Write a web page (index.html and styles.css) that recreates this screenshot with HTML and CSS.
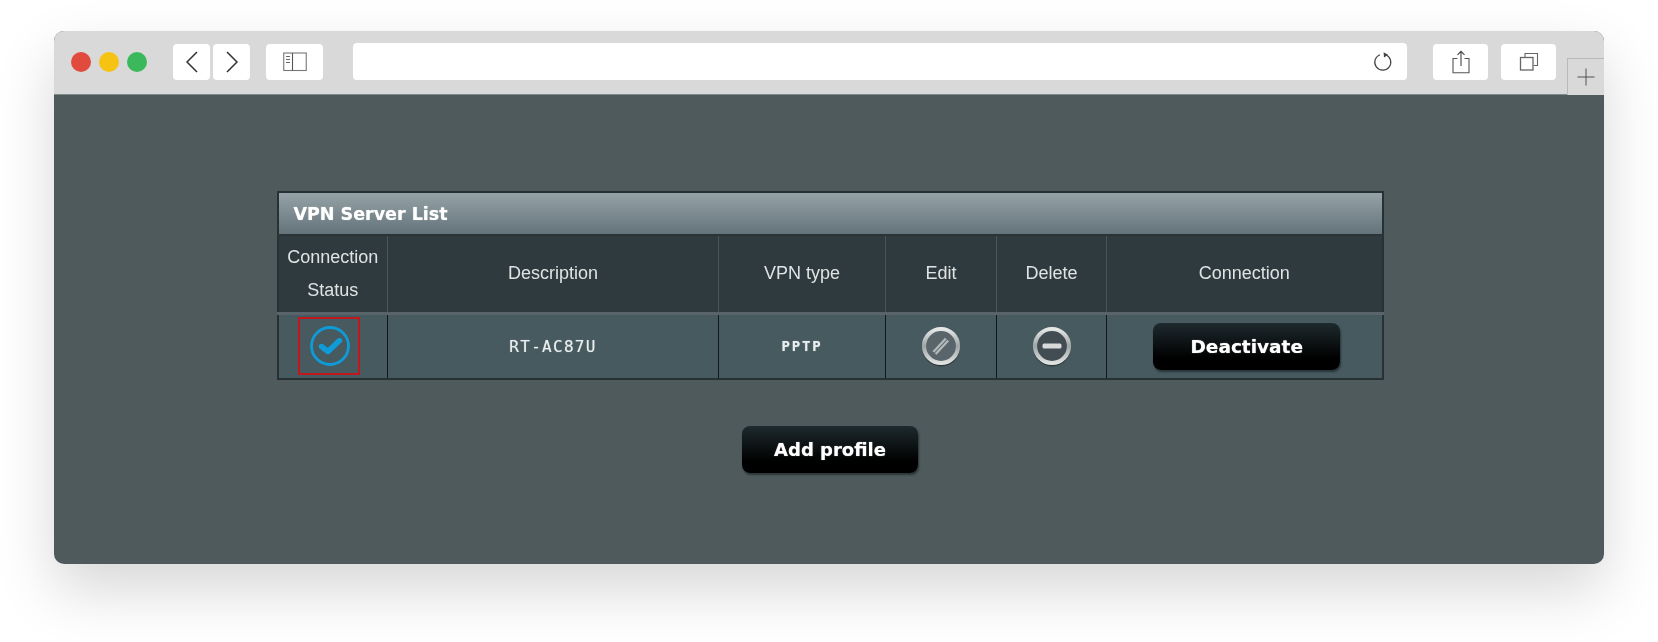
FILE: index.html
```html
<!DOCTYPE html>
<html lang="en">
<head>
<meta charset="utf-8">
<title>VPN Server List</title>
<link rel="stylesheet" href="styles.css">
</head>
<body>
<div class="window">
  <header class="toolbar">
    <div class="lights">
      <span class="light red"></span>
      <span class="light yellow"></span>
      <span class="light green"></span>
    </div>
    <div class="nav-group">
      <button class="tool nav-btn" aria-label="Back">
        <svg width="14" height="22" viewBox="0 0 14 22"><path d="M12 1 2 11l10 10" fill="none" stroke="#333" stroke-width="1.500"/></svg>
      </button>
      <button class="tool nav-btn" aria-label="Forward">
        <svg width="14" height="22" viewBox="0 0 14 22"><path d="M2 1 12 11 2 21" fill="none" stroke="#333" stroke-width="1.500"/></svg>
      </button>
    </div>
    <button class="tool sidebar-btn" aria-label="Sidebar">
      <svg width="24" height="20" viewBox="0 0 24 20"><rect x=".75" y="1" width="22.500" height="17.500" fill="none" stroke="#777" stroke-width="1.100"/><path d="M9.500 1v17.500" stroke="#555" stroke-width="1.100"/><path d="M3 4.500h4M3 7.500h4M3 10.500h4" stroke="#666" stroke-width="1"/></svg>
    </button>
    <div class="address">
      <svg width="20" height="20" viewBox="0 0 20 20"><path d="M12.800 2.800A8 8 0 1 1 7 2.700" fill="none" stroke="#444" stroke-width="1.200"/><path d="M10.600 .2 15 2.800l-4 2.800z" fill="#444"/></svg>
    </div>
    <button class="tool action-btn share-btn" aria-label="Share">
      <svg width="18" height="24" viewBox="0 0 18 24"><path d="M5.500 8.500H1v14.300h16V8.500h-4.500" fill="none" stroke="#555" stroke-width="1.100"/><path d="M9 16V1.500M5.500 4.800 9 1.300l3.500 3.500" fill="none" stroke="#444" stroke-width="1.100"/></svg>
    </button>
    <button class="tool action-btn tabs-btn" aria-label="Tabs">
      <svg width="20" height="20" viewBox="0 0 20 20"><rect x="1.500" y="5.500" width="12.500" height="12.500" fill="none" stroke="#666" stroke-width="1.300"/><path d="M6 5V1.500H18.500V13.500H14.500" fill="none" stroke="#666" stroke-width="1.100"/></svg>
    </button>
    <button class="new-tab" aria-label="New tab">
      <svg width="18" height="18" viewBox="0 0 18 18"><path d="M9 .5v17M.5 9h17" stroke="#444" stroke-width=".9"/></svg>
    </button>
  </header>
  <main class="content">
    <table class="vpn-table">
      <colgroup>
        <col class="c-status"><col class="c-desc"><col class="c-type"><col class="c-edit"><col class="c-del"><col>
      </colgroup>
      <thead>
        <tr><th colspan="6" class="title">VPN Server List</th></tr>
        <tr class="heads">
          <th class="two-line">Connection<br>Status</th>
          <th>Description</th>
          <th>VPN type</th>
          <th>Edit</th>
          <th>Delete</th>
          <th>Connection</th>
        </tr>
      </thead>
      <tbody>
        <tr class="row">
          <td>
            <span class="status-mark">
              <svg width="42" height="42" viewBox="0 0 42 42"><circle cx="21" cy="21" r="18.500" fill="none" stroke="#0f9bd8" stroke-width="2.800"/><path d="M12.500 21.500 19 26.500 30.500 15.500" fill="none" stroke="#0f9bd8" stroke-width="5.400" stroke-linecap="round" stroke-linejoin="round"/></svg>
            </span>
          </td>
          <td class="mono">RT-AC87U</td>
          <td class="mono small">PPTP</td>
          <td>
            <svg class="round-icon" width="44" height="44" viewBox="0 0 44 44">
              <defs>
                <linearGradient id="ring" x1="0" y1="0" x2="0" y2="1"><stop offset="0" stop-color="#e6e8e8"/><stop offset=".5" stop-color="#9fa5a6"/><stop offset="1" stop-color="#dfe1e1"/></linearGradient>
              </defs>
              <circle cx="22" cy="23.500" r="19" fill="#2c3436" opacity=".85"/>
              <circle cx="22" cy="22" r="17" fill="#59656a" stroke="url(#ring)" stroke-width="4.200"/>
              <path d="M15.500 29 28 15.500" stroke="#b4babb" stroke-width="5.500"/>
              <path d="M15 29.500 28.500 15" stroke="#59656a" stroke-width="1.100"/>
            </svg>
          </td>
          <td>
            <svg class="round-icon" width="44" height="44" viewBox="0 0 44 44">
              <circle cx="22" cy="23.500" r="19" fill="#2c3436" opacity=".85"/>
              <circle cx="22" cy="22" r="17" fill="#414d52" stroke="url(#ring)" stroke-width="4.200"/>
              <rect x="12.500" y="19.500" width="19" height="5" rx="1.500" fill="#d8dada"/>
            </svg>
          </td>
          <td><button class="asus-btn deactivate">Deactivate</button></td>
        </tr>
      </tbody>
    </table>
    <button class="asus-btn add">Add profile</button>
  </main>
</div>
</body>
</html>
```
FILE: styles.css
```css
* { box-sizing: border-box; }
html, body { margin: 0; height: 100%; }
body {
  background: #fff;
  padding: 31px 54px 0;
  font-family: "Liberation Sans", Arial, sans-serif;
  overflow: hidden;
}
button { border: 0; padding: 0; font: inherit; cursor: pointer; }

.window {
  height: 533px;
  border-radius: 10px;
  background: #4f5a5c;
  box-shadow: 0 26px 60px rgba(0, 0, 0, .16);
  display: flex;
  flex-direction: column;
}

.toolbar {
  height: 64px;
  flex: none;
  background: #d9d9d9;
  border-radius: 10px 10px 0 0;
  box-shadow: inset 0 -1px 0 #7f8988;
  display: flex;
  align-items: flex-start;
  padding: 13px 0 0 17px;
}
.lights { display: flex; gap: 8px; margin-top: 8px; margin-right: 26px; }
.light { width: 20px; height: 20px; border-radius: 50%; }
.red { background: #e04b3e; }
.yellow { background: #f6c315; }
.green { background: #3bb95a; }

.tool {
  background: #fff;
  border-radius: 4px;
  height: 36px;
  display: flex;
  align-items: center;
  justify-content: center;
}
.nav-group { display: flex; gap: 3px; margin-right: 16px; }
.nav-btn { width: 37px; }
.sidebar-btn { width: 57px; margin-right: 30px; }
.address {
  flex: 1;
  height: 37px;
  margin-top: -1px;
  background: #fff;
  border-radius: 4px;
  display: flex;
  align-items: center;
  justify-content: flex-end;
  padding-right: 14px;
  margin-right: 26px;
}
.action-btn { width: 55px; }
.share-btn { margin-right: 13px; }
.tabs-btn { margin-right: 11px; }
.new-tab {
  align-self: flex-end;
  width: 37px;
  height: 37px;
  background: #d9d9d9;
  border: 1px solid #b9b9b9;
  border-width: 1px 0 0 1px;
  display: flex;
  align-items: center;
  justify-content: center;
}

.content {
  flex: 1;
  display: flex;
  flex-direction: column;
  align-items: center;
  padding: 96px 0 0 2px;
  filter: blur(.45px);
}

.vpn-table {
  width: 1107px;
  border-collapse: collapse;
  table-layout: fixed;
  border: 2px solid #273032;
  color: #e6eaea;
}
.c-status { width: 110px; }
.c-desc { width: 331px; }
.c-type { width: 167px; }
.c-edit { width: 111px; }
.c-del { width: 110px; }

.title {
  height: 43px;
  text-align: left;
  padding: 0 0 0 15px;
  font: 700 17.500px "DejaVu Sans", Verdana, sans-serif;
  color: #fff;
  text-shadow: 0 0 1px rgba(255, 255, 255, .7);
  background: linear-gradient(#95a3a8, #64737a);
  border-bottom: 2px solid #2a3437;
}
.heads th {
  height: 78px;
  padding: 0;
  font: 400 18px "Liberation Sans", Arial, sans-serif;
  color: #dfe3e3;
  background: #2f3a3e;
  border-left: 1px solid #4a5558;
  border-bottom: 3px solid #59636a;
}
.heads th:first-child { border-left: 0; }
.heads .two-line { line-height: 33px; }

.row td {
  height: 66px;
  padding: 0;
  text-align: center;
  vertical-align: middle;
  background: #475a60;
  border-left: 1px solid #11181a;
  border-top: 2px solid #11181a;
}
.row td:first-child { border-left: 0; }
.mono {
  font: 400 16px "DejaVu Sans Mono", "Liberation Mono", monospace;
  letter-spacing: 1.300px;
  color: #e8eded;
  text-shadow: 0 0 1px rgba(255, 255, 255, .6);
}
.mono.small { font-size: 14px; font-weight: 700; letter-spacing: 1.800px; }

.status-mark {
  display: inline-flex;
  align-items: center;
  justify-content: center;
  width: 62px;
  height: 58px;
  margin-right: 7px;
  padding-left: 2px;
  border: 2px solid #c1181f;
  vertical-align: middle;
}
.round-icon { display: inline-block; vertical-align: middle; }

.asus-btn {
  background: linear-gradient(#1e2a2e, #000 75%);
  color: #fff;
  border-radius: 8px;
  font: 700 18px "DejaVu Sans", Verdana, sans-serif;
  text-shadow: 0 0 1px rgba(255, 255, 255, .7);
  box-shadow: 1px 2px 2px rgba(20, 28, 30, .6);
}
.deactivate { width: 187px; height: 47px; margin-left: 5px; vertical-align: middle; font-size: 18.500px; }
.add { width: 176px; height: 47px; margin-top: 46px; font-size: 18px; }
```
